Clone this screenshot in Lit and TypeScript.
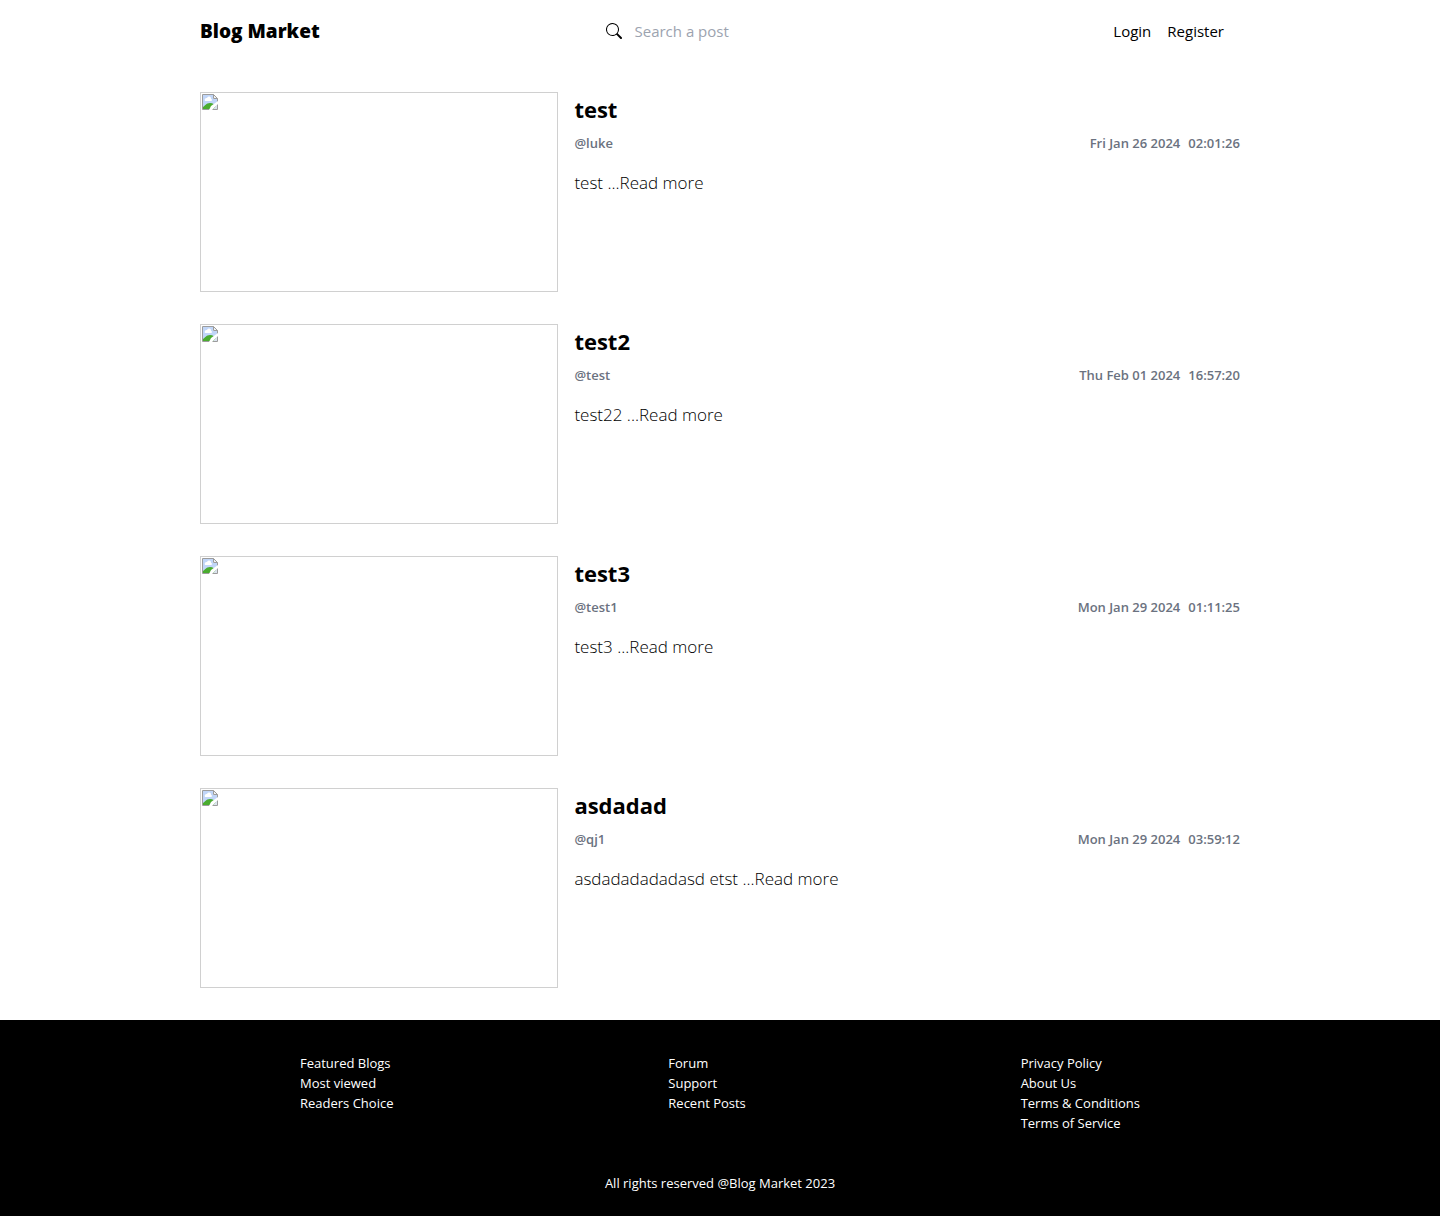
import { LitElement, html, css } from "lit";
import { customElement, property } from "lit/decorators.js";

interface Post {
  title: string;
  author: string;
  date: string;
  time: string;
  excerpt: string;
}

const posts: Post[] = [
  { title: "test", author: "luke", date: "Fri Jan 26 2024", time: "02:01:26", excerpt: "test" },
  { title: "test2", author: "test", date: "Thu Feb 01 2024", time: "16:57:20", excerpt: "test22" },
  { title: "test3", author: "test1", date: "Mon Jan 29 2024", time: "01:11:25", excerpt: "test3" },
  { title: "asdadad", author: "qj1", date: "Mon Jan 29 2024", time: "03:59:12", excerpt: "asdadadadadasd etst" },
];

const footerColumns: string[][] = [
  ["Featured Blogs", "Most viewed", "Readers Choice"],
  ["Forum", "Support", "Recent Posts"],
  ["Privacy Policy", "About Us", "Terms & Conditions", "Terms of Service"],
];

@customElement("blog-post")
export class BlogPost extends LitElement {
  static styles = css`
    :host {
      display: grid;
      grid-template-columns: 35fr 65fr;
      gap: 16px;
    }
    .picture {
      box-sizing: border-box;
      height: 200px;
      padding: 1px;
      border: 1px solid #d0d0d0;
    }
    .missing {
      display: block;
      width: 16px;
      height: 16px;
    }
    .body {
      min-width: 0;
    }
    .title {
      margin: 0;
      font-size: 22px;
      font-weight: 700;
      line-height: 34px;
    }
    .meta {
      display: flex;
      justify-content: space-between;
      margin: 5px 0 16px;
      font-size: 13px;
      font-weight: 600;
      line-height: 24px;
      color: #6b7280;
    }
    .when {
      display: flex;
      gap: 8px;
    }
    .meta p,
    .excerpt {
      margin: 0;
    }
    .excerpt {
      font-size: 17px;
      font-weight: 300;
      line-height: 24px;
    }
    .more {
      color: inherit;
      text-decoration: none;
    }
  `;

  @property({ attribute: false }) post!: Post;

  render() {
    const { title, author, date, time, excerpt } = this.post;
    return html`
      <div class="picture">
        <svg class="missing" viewBox="0 0 16 16" aria-hidden="true">
          <path d="M.5.5h11l4 4v11H.5z" fill="#fff" stroke="#9c9c9c" />
          <path d="M1 1h10v4h4v10H1z" fill="#c1d6f8" />
          <path d="M3 7a2 2 0 0 1 2-3 2 2 0 0 1 4 1 1 1 0 0 1 0 2z" fill="#fff" />
          <path d="M1 15v-2c2-1 3-4 7-4 3 0 5 2 6 4v2z" fill="#4aac2f" />
          <path d="M11.5.5v4h4z" fill="#f2f2f2" stroke="#9c9c9c" />
          <path d="M16 7v3l-6 6H7l2-4z" fill="#fff" />
          <path d="M15 11v4h-4z" fill="#dbe3ee" />
        </svg>
      </div>
      <div class="body">
        <h1 class="title">${title}</h1>
        <div class="meta">
          <p>@${author}</p>
          <p class="when"><span>${date}</span><span>${time}</span></p>
        </div>
        <p class="excerpt">${excerpt} <a class="more" href="#">...Read more</a></p>
      </div>
    `;
  }
}

@customElement("app-root")
export class AppRoot extends LitElement {
  static styles = css`
    :host {
      display: flex;
      flex-direction: column;
      min-height: 100vh;
      background: #fff;
      color: #000;
      font-family: "Open Sans", "Noto Sans", sans-serif;
    }
    a {
      color: inherit;
      text-decoration: none;
    }
    .header {
      display: flex;
      align-items: center;
      justify-content: space-between;
      padding: 13px 200px 15px;
      line-height: 36px;
    }
    .brand {
      margin: 0;
      font-size: 19px;
      font-weight: 800;
    }
    .search {
      display: flex;
      align-items: center;
    }
    .glass {
      width: 16px;
      height: 16px;
    }
    .field {
      box-sizing: border-box;
      width: 204px;
      padding: 4px 12px;
      border: 0;
      outline: 0;
      background: transparent;
      font-family: inherit;
      font-size: 15px;
      font-weight: 400;
      line-height: 24px;
      color: #000;
    }
    .field::placeholder {
      color: #9ca3af;
      opacity: 1;
    }
    .account {
      display: flex;
      gap: 16px;
      padding-right: 16px;
      font-size: 15px;
    }
    .posts {
      display: flex;
      flex: 1;
      flex-direction: column;
      gap: 32px;
      padding: 28px 200px 32px;
    }
    .footer {
      padding: 33px 300px 23px;
      background: #000;
      color: #fff;
      font-size: 13px;
      line-height: 20px;
    }
    .columns {
      display: flex;
      justify-content: space-between;
    }
    .list {
      margin: 0;
      padding: 0;
      list-style: none;
    }
    .rights {
      margin: 40px 0 0;
      text-align: center;
    }
  `;

  render() {
    return html`
      <header class="header">
        <p class="brand"><a href="#">Blog Market</a></p>
        <label class="search">
          <svg class="glass" viewBox="0 0 16 16" fill="currentColor" role="img" aria-label="Search">
            <path
              d="M11.742 10.344a6.5 6.5 0 1 0-1.397 1.398h-.001c.03.04.062.078.098.115l3.85 3.85a1 1 0 0 0 1.415-1.414l-3.85-3.85a1.007 1.007 0 0 0-.115-.1zM12 6.5a5.5 5.5 0 1 1-11 0 5.5 5.5 0 0 1 11 0z"
            />
          </svg>
          <input class="field" type="text" placeholder="Search a post" />
        </label>
        <nav class="account">
          <a href="#">Login</a>
          <a href="#">Register</a>
        </nav>
      </header>
      <main class="posts">${posts.map((post) => html`<blog-post .post=${post}></blog-post>`)}</main>
      <footer class="footer">
        <div class="columns">
          ${footerColumns.map(
            (column) => html`
              <ul class="list">
                ${column.map((label) => html`<li><a href="#">${label}</a></li>`)}
              </ul>
            `,
          )}
        </div>
        <p class="rights">All rights reserved @Blog Market 2023</p>
      </footer>
    `;
  }
}
